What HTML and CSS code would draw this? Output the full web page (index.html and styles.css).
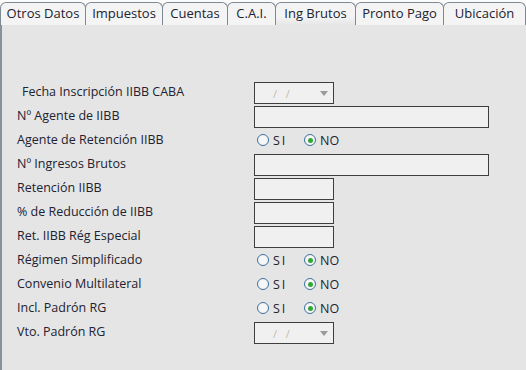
FILE: index.html
```html
<!DOCTYPE html>
<html lang="es">
<head>
    <meta charset="UTF-8">
    <title>Ing Brutos</title>
    <link rel="stylesheet" href="styles.css">
</head>
<body>
    <div class="tabs">
        <div class="tab" style="width:86px">Otros Datos</div>
        <div class="tab" style="width:78px">Impuestos</div>
        <div class="tab" style="width:66px">Cuentas</div>
        <div class="tab" style="width:49px">C.A.I.</div>
        <div class="tab active" style="width:81px">Ing Brutos</div>
        <div class="tab" style="width:89px">Pronto Pago</div>
        <div class="tab last">Ubicación</div>
    </div>
    <div class="panel">
        <div class="form">
            <div class="label first">Fecha Inscripción IIBB CABA</div>
            <div class="date"><span class="slash">/&nbsp;&nbsp;/</span><span class="arrow"></span></div>

            <div class="label">Nº Agente de IIBB</div>
            <div class="input wide"></div>

            <div class="label">Agente de Retención IIBB</div>
            <div class="radios">
                <span class="radio"></span><span class="opt si">SI</span>
                <span class="radio on"></span><span class="opt">NO</span>
            </div>

            <div class="label">Nº Ingresos Brutos</div>
            <div class="input wide"></div>

            <div class="label">Retención IIBB</div>
            <div class="input"></div>

            <div class="label">% de Reducción de IIBB</div>
            <div class="input"></div>

            <div class="label">Ret. IIBB Rég Especial</div>
            <div class="input"></div>

            <div class="label">Régimen Simplificado</div>
            <div class="radios">
                <span class="radio"></span><span class="opt si">SI</span>
                <span class="radio on"></span><span class="opt">NO</span>
            </div>

            <div class="label">Convenio Multilateral</div>
            <div class="radios">
                <span class="radio"></span><span class="opt si">SI</span>
                <span class="radio on"></span><span class="opt">NO</span>
            </div>

            <div class="label">Incl. Padrón RG</div>
            <div class="radios">
                <span class="radio"></span><span class="opt si">SI</span>
                <span class="radio on"></span><span class="opt">NO</span>
            </div>

            <div class="label">Vto. Padrón RG</div>
            <div class="date"><span class="slash">/&nbsp;&nbsp;/</span><span class="arrow"></span></div>
        </div>
    </div>
</body>
</html>
```

FILE: styles.css
```css
body {
    margin: 0;
    font-family: 'Open Sans', 'DejaVu Sans', sans-serif;
    font-size: 12.5px;
    color: #222230;
    background: #fbfbfb;
    height: 370px;
    display: flex;
    flex-direction: column;
    overflow: hidden;
}
.tabs {
    display: flex;
    padding-top: 2px;
    height: 22px;
}
.tab {
    box-sizing: border-box;
    height: 23px;
    border: 1px solid #7d8a94;
    border-bottom: none;
    border-radius: 6px 6px 0 0;
    background: #f4f4f4;
    font-size: 13px;
    line-height: 20px;
    text-align: center;
    margin-right: -1px;
    position: relative;
    z-index: 1;
}
.tab.active {
    background: linear-gradient(#f4f4f4 60%, #e6e6e6);
    z-index: 2;
}
.tab.last {
    flex: 1;
    margin-right: 0;
}
.panel {
    flex: 1;
    background: #e5e5e5;
    border-top: 1px solid #7d8a94;
    border-left: 2px solid #8a9299;
    padding: 57px 0 0 15px;
}
.form {
    display: grid;
    grid-template-columns: 237px auto;
    grid-auto-rows: 22px;
    row-gap: 2px;
    align-items: center;
}
.label {
    line-height: 18px;
    padding-bottom: 3px;
}
.label.first {
    padding-left: 5px;
}
.input, .date {
    box-sizing: border-box;
    height: 22px;
    width: 80px;
    border: 1px solid #3e3e3e;
    background: #f0f0f0;
}
.input.wide {
    width: 235px;
}
.date {
    display: flex;
    align-items: center;
    justify-content: space-between;
    padding: 0 5px 0 18px;
}
.slash {
    color: #c8b8a0;
    font-size: 11px;
    letter-spacing: 1px;
}
.arrow {
    width: 0;
    height: 0;
    border-left: 4px solid transparent;
    border-right: 4px solid transparent;
    border-top: 5px solid #9a9a9a;
}
.radios {
    display: flex;
    align-items: center;
    padding-left: 3px;
}
.radio {
    box-sizing: border-box;
    width: 12px;
    height: 12px;
    border: 1px solid #3f6ea0;
    border-radius: 50%;
    background: #f4f6f8;
    display: flex;
    align-items: center;
    justify-content: center;
    margin-bottom: 2px;
}
.radio.on::after {
    content: "";
    width: 5px;
    height: 5px;
    border-radius: 50%;
    background: #2fa83a;
}
.opt {
    margin-left: 4px;
    line-height: 14px;
}
.opt.si {
    width: 31px;
    letter-spacing: 2px;
}
```
